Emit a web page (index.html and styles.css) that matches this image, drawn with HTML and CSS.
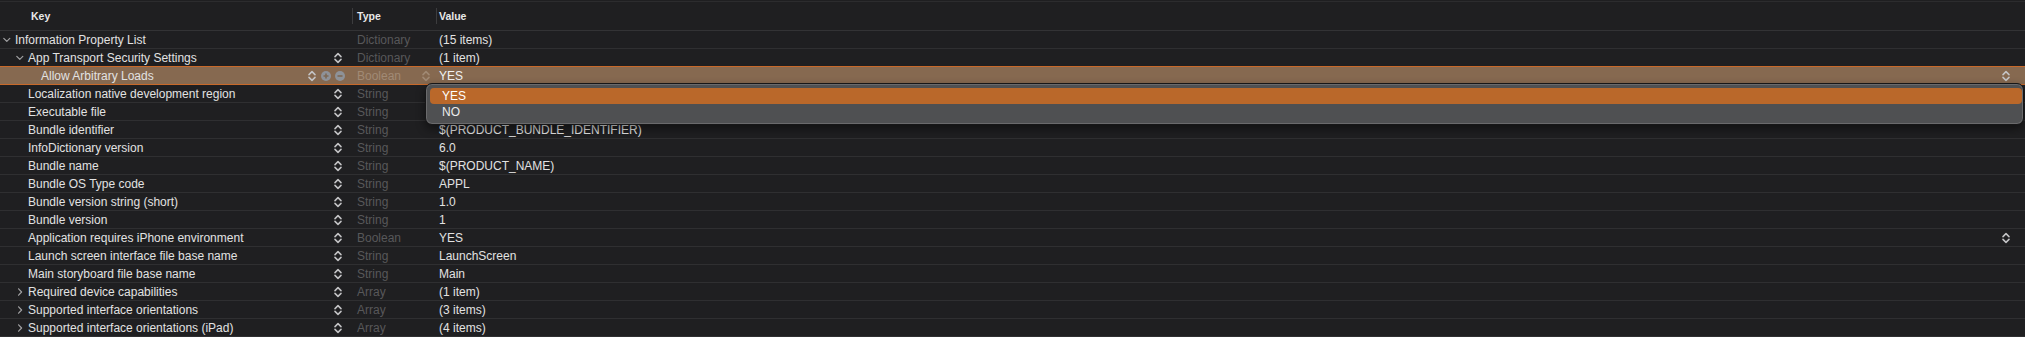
FILE: index.html
```html
<!DOCTYPE html>
<html lang="en">
<head>
    <meta charset="UTF-8">
    <meta name="viewport" content="width=device-width, initial-scale=1.0">
    <title>Info.plist</title>
    <link rel="stylesheet" href="styles.css">
</head>
<body>
    <svg width="0" height="0" class="defs">
        <defs>
            <symbol id="stepper" viewBox="0 0 8 12">
                <path d="M1 4.6 L4 1.6 L7 4.6 M1 7.4 L4 10.4 L7 7.4" fill="none" stroke="currentColor" stroke-width="1.5" stroke-linecap="round" stroke-linejoin="round"/>
            </symbol>
            <symbol id="open" viewBox="0 0 12 8">
                <path d="M0.8 2.4 L3.8 5.4 L6.8 2.4" fill="none" stroke="currentColor" stroke-width="1.2" stroke-linecap="round" stroke-linejoin="round"/>
            </symbol>
            <symbol id="closed" viewBox="0 0 12 8">
                <path d="M2.6 0.8 L5.6 4 L2.6 7.2" fill="none" stroke="currentColor" stroke-width="1.2" stroke-linecap="round" stroke-linejoin="round"/>
            </symbol>
        </defs>
    </svg>

    <div class="plist">
        <div class="plist-header">
            <div class="head-cell head-key">Key</div>
            <div class="head-cell head-type">Type</div>
            <div class="head-cell head-value">Value</div>
        </div>

        <div class="row">
            <div class="cell key depth-0"><svg class="disclosure"><use href="#open"/></svg><span>Information Property List</span></div>
            <div class="cell type">Dictionary</div>
            <div class="cell value">(15 items)</div>
        </div>
        <div class="row">
            <div class="cell key depth-1"><svg class="disclosure"><use href="#open"/></svg><span>App Transport Security Settings</span><svg class="stepper"><use href="#stepper"/></svg></div>
            <div class="cell type">Dictionary</div>
            <div class="cell value">(1 item)</div>
        </div>
        <div class="row selected">
            <div class="cell key depth-2"><span class="disclosure"></span><span>Allow Arbitrary Loads</span>
                <span class="row-actions">
                    <svg class="stepper"><use href="#stepper"/></svg>
                    <svg class="round-btn" viewBox="0 0 10 10"><circle cx="5" cy="5" r="5"/><path d="M2.5 5 H7.5 M5 2.5 V7.5"/></svg>
                    <svg class="round-btn" viewBox="0 0 10 10"><circle cx="5" cy="5" r="5"/><path d="M2.5 5 H7.5"/></svg>
                </span>
            </div>
            <div class="cell type">Boolean<svg class="stepper dim"><use href="#stepper"/></svg></div>
            <div class="cell value">YES<svg class="stepper"><use href="#stepper"/></svg></div>
        </div>
        <div class="row">
            <div class="cell key depth-1"><span class="disclosure"></span><span>Localization native development region</span><svg class="stepper"><use href="#stepper"/></svg></div>
            <div class="cell type">String</div>
            <div class="cell value"></div>
        </div>
        <div class="row">
            <div class="cell key depth-1"><span class="disclosure"></span><span>Executable file</span><svg class="stepper"><use href="#stepper"/></svg></div>
            <div class="cell type">String</div>
            <div class="cell value"></div>
        </div>
        <div class="row">
            <div class="cell key depth-1"><span class="disclosure"></span><span>Bundle identifier</span><svg class="stepper"><use href="#stepper"/></svg></div>
            <div class="cell type">String</div>
            <div class="cell value">$(PRODUCT_BUNDLE_IDENTIFIER)</div>
        </div>
        <div class="row">
            <div class="cell key depth-1"><span class="disclosure"></span><span>InfoDictionary version</span><svg class="stepper"><use href="#stepper"/></svg></div>
            <div class="cell type">String</div>
            <div class="cell value">6.0</div>
        </div>
        <div class="row">
            <div class="cell key depth-1"><span class="disclosure"></span><span>Bundle name</span><svg class="stepper"><use href="#stepper"/></svg></div>
            <div class="cell type">String</div>
            <div class="cell value">$(PRODUCT_NAME)</div>
        </div>
        <div class="row">
            <div class="cell key depth-1"><span class="disclosure"></span><span>Bundle OS Type code</span><svg class="stepper"><use href="#stepper"/></svg></div>
            <div class="cell type">String</div>
            <div class="cell value">APPL</div>
        </div>
        <div class="row">
            <div class="cell key depth-1"><span class="disclosure"></span><span>Bundle version string (short)</span><svg class="stepper"><use href="#stepper"/></svg></div>
            <div class="cell type">String</div>
            <div class="cell value">1.0</div>
        </div>
        <div class="row">
            <div class="cell key depth-1"><span class="disclosure"></span><span>Bundle version</span><svg class="stepper"><use href="#stepper"/></svg></div>
            <div class="cell type">String</div>
            <div class="cell value">1</div>
        </div>
        <div class="row">
            <div class="cell key depth-1"><span class="disclosure"></span><span>Application requires iPhone environment</span><svg class="stepper"><use href="#stepper"/></svg></div>
            <div class="cell type">Boolean</div>
            <div class="cell value">YES<svg class="stepper"><use href="#stepper"/></svg></div>
        </div>
        <div class="row">
            <div class="cell key depth-1"><span class="disclosure"></span><span>Launch screen interface file base name</span><svg class="stepper"><use href="#stepper"/></svg></div>
            <div class="cell type">String</div>
            <div class="cell value">LaunchScreen</div>
        </div>
        <div class="row">
            <div class="cell key depth-1"><span class="disclosure"></span><span>Main storyboard file base name</span><svg class="stepper"><use href="#stepper"/></svg></div>
            <div class="cell type">String</div>
            <div class="cell value">Main</div>
        </div>
        <div class="row">
            <div class="cell key depth-1"><svg class="disclosure"><use href="#closed"/></svg><span>Required device capabilities</span><svg class="stepper"><use href="#stepper"/></svg></div>
            <div class="cell type">Array</div>
            <div class="cell value">(1 item)</div>
        </div>
        <div class="row">
            <div class="cell key depth-1"><svg class="disclosure"><use href="#closed"/></svg><span>Supported interface orientations</span><svg class="stepper"><use href="#stepper"/></svg></div>
            <div class="cell type">Array</div>
            <div class="cell value">(3 items)</div>
        </div>
        <div class="row">
            <div class="cell key depth-1"><svg class="disclosure"><use href="#closed"/></svg><span>Supported interface orientations (iPad)</span><svg class="stepper"><use href="#stepper"/></svg></div>
            <div class="cell type">Array</div>
            <div class="cell value">(4 items)</div>
        </div>

        <!-- open YES/NO menu for the selected Boolean -->
        <div class="popup">
            <div class="popup-item active">YES</div>
            <div class="popup-item">NO</div>
        </div>
    </div>
</body>
</html>
```

FILE: styles.css
```css
* {
    box-sizing: border-box;
}
body {
    margin: 0;
    background-color: #1f1f21;
    font-family: "Liberation Sans", Arial, sans-serif;
    font-size: 12px;
    color: #e2e2e2;
    overflow: hidden;
}
.defs {
    position: absolute;
}
.plist {
    position: relative;
}
.plist-header {
    display: grid;
    grid-template-columns: 352px 84px 1fr;
    align-items: center;
    height: 30px;
    margin-top: 1px;
    border-top: 1px solid #2c2c2e;
    border-bottom: 1px solid #333335;
    font-size: 10.5px;
    font-weight: bold;
    color: #e8e8e8;
}
.head-cell {
    display: flex;
    align-items: center;
    height: 16px;
}
.head-key {
    padding-left: 31px;
}
.head-type {
    border-left: 1px solid #3c3c3e;
    padding-left: 4px;
}
.head-value {
    border-left: 1px solid #3c3c3e;
    padding-left: 2px;
}
.row {
    display: grid;
    grid-template-columns: 352px 84px 1fr;
    height: 18px;
    border-bottom: 1px solid #2f2f31;
}
.cell {
    display: flex;
    align-items: center;
    white-space: nowrap;
    overflow: hidden;
}
.key {
    padding-right: 10px;
}
.depth-0 {
    padding-left: 3px;
}
.depth-1 {
    padding-left: 16px;
}
.depth-2 {
    padding-left: 29px;
}
.disclosure {
    flex: none;
    width: 12px;
    height: 8px;
    color: #a0a0a2;
}
.type {
    padding-left: 5px;
    padding-right: 6px;
    color: #58585a;
}
.value {
    padding-left: 3px;
    padding-right: 15px;
}
.stepper {
    flex: none;
    width: 8px;
    height: 12px;
    margin-left: auto;
    color: #c4c4c6;
}
.stepper.dim {
    color: #a08974;
}
.row-actions {
    display: flex;
    align-items: center;
    gap: 4px;
    margin-left: auto;
    margin-right: -3px;
}
.row-actions .stepper {
    margin-right: 1px;
}
.round-btn {
    width: 10px;
    height: 10px;
}
.round-btn circle {
    fill: #8e9298;
}
.round-btn path {
    stroke: #7d6854;
    stroke-width: 1.6;
}
.selected {
    background-color: #866950;
    border-bottom-color: #c8692a;
    box-shadow: 0 -1px 0 #c8692a;
}
.selected .type {
    color: #a18a75;
}
.selected .value {
    color: #f2f2f2;
}
.popup {
    position: absolute;
    top: 82px;
    left: 425px;
    width: 1599px;
    padding: 4px 1px 4px 4px;
    background-color: #4f5052;
    border: 1px solid #161617;
    border-radius: 7px;
    box-shadow: inset 0 0 0 1px #6a6a6c, 0 4px 10px rgba(0, 0, 0, 0.45);
}
.popup-item {
    height: 16px;
    line-height: 16px;
    padding-left: 12px;
    border-radius: 4px;
    color: #ececec;
}
.popup-item.active {
    background-color: #ba682a;
    color: #ffffff;
}
```
